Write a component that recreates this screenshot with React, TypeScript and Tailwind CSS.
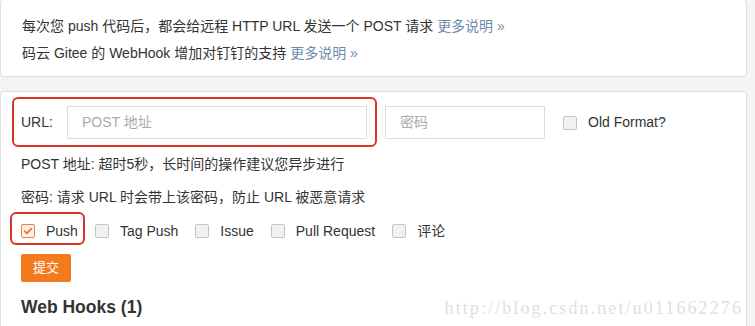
import { useState } from "react"

const font = { fontFamily: '"Liberation Sans", "Noto Sans CJK SC", sans-serif' }

const Box = ({ checked }: { checked?: boolean }) =>
  checked ? (
    <span className="flex h-[14px] w-[14px] shrink-0 items-center justify-center rounded-[2px] border border-[#f0833a] bg-[#fdf1e8]">
      <svg viewBox="0 0 12 12" className="h-[10px] w-[10px]">
        <path d="M2 6.2l2.6 2.6L10 3.2" fill="none" stroke="#ee7424" strokeWidth="2" strokeLinecap="round" strokeLinejoin="round" />
      </svg>
    </span>
  ) : (
    <span className="h-[14px] w-[14px] shrink-0 rounded-[2px] border border-[#c4c4c4] bg-[#f1f1f1]" />
  )

export default function App() {
  const [events] = useState([
    { name: "Push", checked: true },
    { name: "Tag Push", checked: false },
    { name: "Issue", checked: false },
    { name: "Pull Request", checked: false },
    { name: "评论", checked: false },
  ])

  return (
    <div className="relative h-[326px] w-[755px] overflow-hidden bg-[#f4f4f4] text-[14px] text-[#333]" style={font}>
      <div className="-mt-px h-[78px] w-[747px] rounded border border-[#e0e0e0] bg-white pl-[21px] pt-[13px] leading-[27px]">
        <div>
          每次您 push 代码后，都会给远程 HTTP URL 发送一个 POST 请求 <span className="text-[#6b8bab]">更多说明 »</span>
        </div>
        <div>
          码云 Gitee 的 WebHook 增加对钉钉的支持 <span className="text-[#6b8bab]">更多说明 »</span>
        </div>
      </div>

      <div className="relative mt-[14px] h-[260px] w-[747px] rounded border border-[#e0e0e0] bg-white pl-[20px] pt-[14px]">
        <div className="flex h-[33px] items-center">
          <span className="w-[46px]">URL:</span>
          <div className="flex h-[33px] w-[300px] items-center border border-[#dcdcdc] px-[14px] text-[#aaa]">POST 地址</div>
          <div className="ml-[18px] flex h-[33px] w-[160px] items-center border border-[#dcdcdc] px-[14px] text-[#aaa]">密码</div>
          <div className="ml-[18px] flex items-center gap-[11px]">
            <Box />
            <span>Old Format?</span>
          </div>
        </div>

        <div className="mt-[15px] leading-[20px]">POST 地址: 超时5秒，长时间的操作建议您异步进行</div>
        <div className="mt-[13px] leading-[20px]">密码: 请求 URL 时会带上该密码，防止 URL 被恶意请求</div>

        <div className="mt-[14px] flex h-[20px] items-center gap-[17px]">
          {events.map((e) => (
            <div key={e.name} className="flex items-center gap-[11px]">
              <Box checked={e.checked} />
              <span>{e.name}</span>
            </div>
          ))}
        </div>

        <button className="mt-[13px] flex h-[28px] w-[50px] items-center justify-center rounded-[2px] bg-[#f37b1d] text-[13px] text-white">
          提交
        </button>

        <div className="mt-[13px] text-[17.5px] font-bold leading-[24px]">Web Hooks (1)</div>

        <div
          className="absolute right-[3px] top-[204px] text-[18px] leading-[24px] tracking-[2.1px] text-[#e0e0e0]"
          style={{ fontFamily: '"Liberation Serif", serif' }}
        >
          http://blog.csdn.net/u011662276
        </div>

        {/* annotation frames */}
        <div className="pointer-events-none absolute left-[11px] top-[5px] h-[50px] w-[365px] rounded-md border-2 border-[#d4372c]" />
        <div className="pointer-events-none absolute left-[9px] top-[120px] h-[33px] w-[75px] rounded-md border-2 border-[#d4372c]" />
      </div>
    </div>
  )
}
